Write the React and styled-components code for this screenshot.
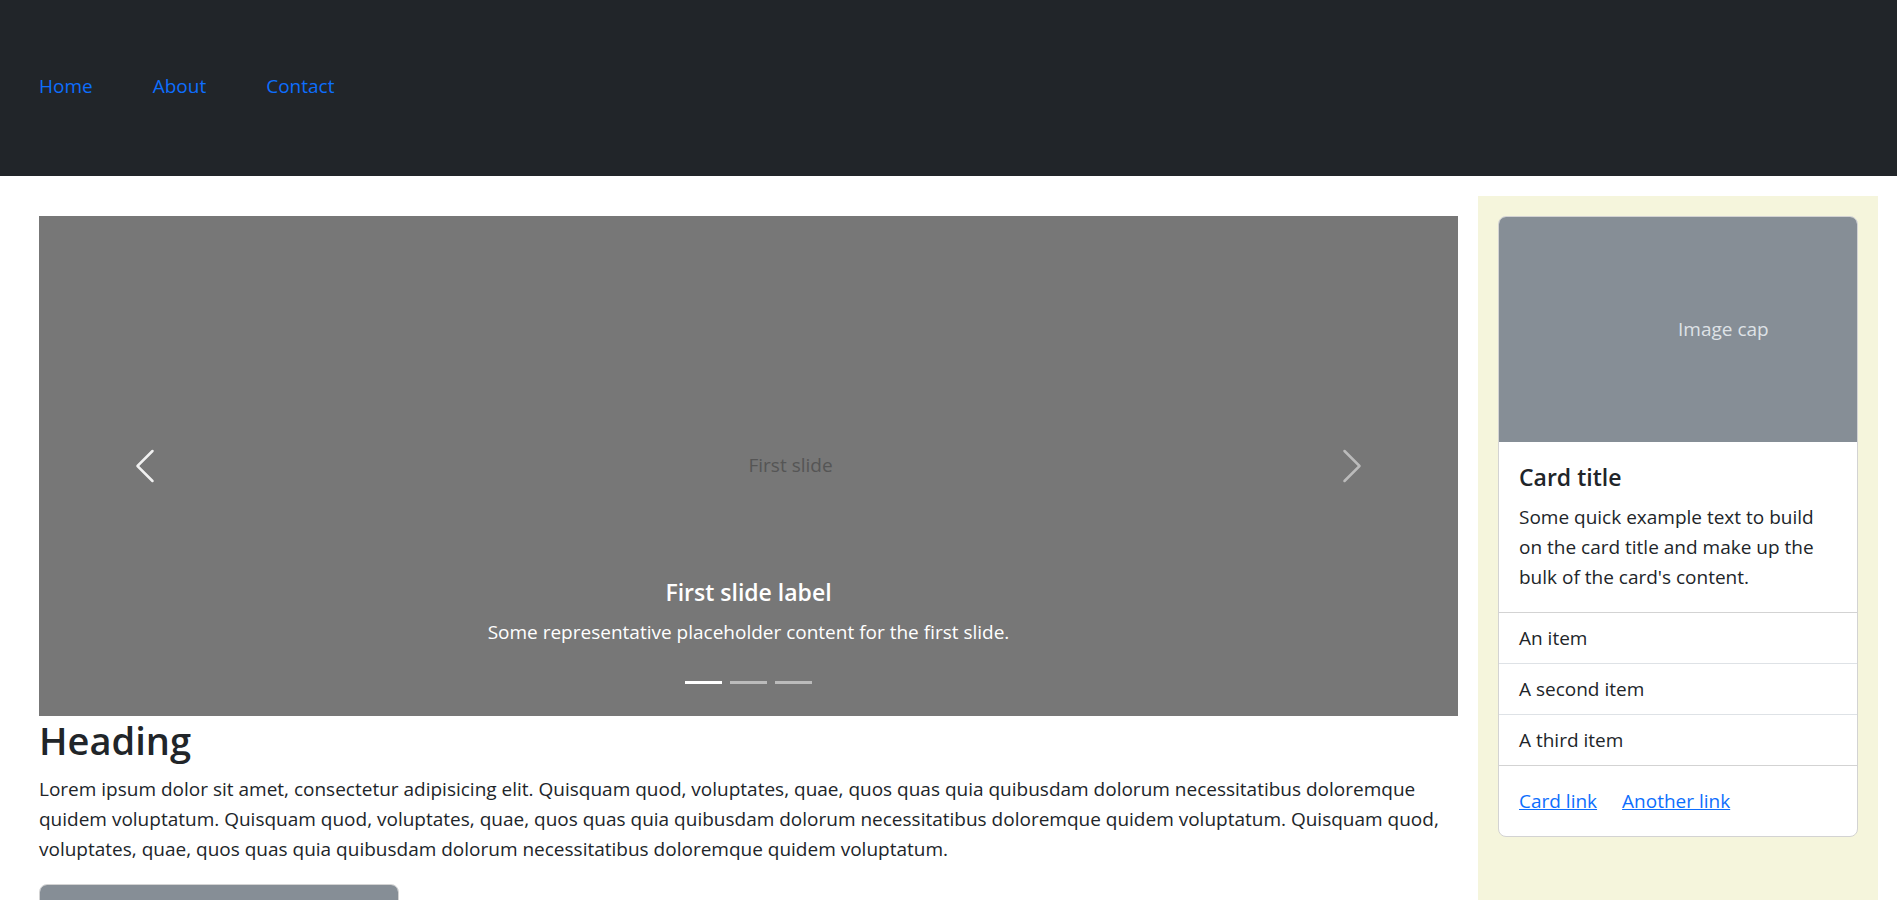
import React from "react";
import styled, { createGlobalStyle } from "styled-components";

const Global = createGlobalStyle`
  *, *::before, *::after { box-sizing: border-box; }
  body {
    margin: 0;
    font-family: "Open Sans", "Noto Sans", sans-serif;
    font-size: 19px;
    line-height: 30px;
    color: #212529;
    background: #fff;
  }
  h1, h5, p, ul { margin: 0; padding: 0; }
`;

const Header = styled.header`
  background: #212529;
  padding: 71px 39px 75px;
`;
const Nav = styled.nav`
  display: flex;
  gap: 60px;
`;
const NavLink = styled.a`
  color: #0d6efd;
  text-decoration: none;
`;
const Page = styled.div`
  display: flex;
  padding: 20px 19px 0 39px;
`;
const Main = styled.main`
  flex: 1;
  min-width: 0;
  padding: 20px 20px 0 0;
`;
const Carousel = styled.section`
  position: relative;
  height: 500px;
  display: flex;
  align-items: center;
  background: #777;
  color: #fff;
`;
const SlideText = styled.span`
  margin-left: 50%;
  padding-bottom: 2px;
  color: #555;
`;
const Control = styled.button`
  position: absolute;
  top: 0;
  bottom: 0;
  ${(p) => p.$side}: 0;
  width: 15%;
  border: 0;
  background: none;
  color: #fff;
  opacity: ${(p) => (p.$active ? 0.9 : 0.5)};
  display: flex;
  align-items: center;
  justify-content: center;
`;
const Caption = styled.div`
  position: absolute;
  left: 15%;
  right: 15%;
  bottom: 69px;
  text-align: center;
`;
const Title = styled.h5`
  font-size: 23px;
  line-height: 30px;
  font-weight: 600;
  margin-bottom: 10px;
`;
const Indicators = styled.div`
  position: absolute;
  left: 15%;
  right: 15%;
  bottom: 32px;
  display: flex;
  justify-content: center;
  gap: 8px;
`;
const Indicator = styled.button`
  width: 37px;
  height: 3px;
  padding: 0;
  border: 0;
  background: #fff;
  opacity: ${(p) => (p.$active ? 1 : 0.5)};
`;
const Heading = styled.h1`
  font-size: 38px;
  line-height: 48px;
  font-weight: 600;
  margin-bottom: 10px;
`;
const Aside = styled.aside`
  width: 400px;
  background: #f5f5dc;
  padding: 20px;
`;
const Card = styled.article`
  border: 1px solid #d3d3d3;
  border-radius: 8px;
  background: #fff;
  overflow: hidden;
`;
const ImageCap = styled.div`
  height: 225px;
  display: flex;
  align-items: center;
  background: #868e96;
  color: #dee2e6;
`;
const CapText = styled.span`
  margin-left: 50%;
  padding-bottom: 2px;
`;
const CardBody = styled.div`
  padding: 20px;
`;
const List = styled.ul`
  list-style: none;
  border-top: 1px solid #d3d3d3;
  border-bottom: 1px solid #d3d3d3;
`;
const Item = styled.li`
  padding: 10px 20px;
  & + & { border-top: 1px solid #dee2e6; }
`;
const CardLinks = styled.div`
  padding: 20px;
  display: flex;
  gap: 25px;
`;
const CardLink = styled.a`
  color: #0d6efd;
`;
const NextCard = styled(Card)`
  width: 360px;
  margin-top: 20px;
`;

function Chevron({ d }) {
  return (
    <svg width="40" height="40" viewBox="0 0 16 16" fill="currentColor" aria-hidden="true">
      <path fillRule="evenodd" d={d} />
    </svg>
  );
}
const LEFT = "M11.354 1.646a.5.5 0 0 1 0 .708L5.707 8l5.647 5.646a.5.5 0 0 1-.708.708l-6-6a.5.5 0 0 1 0-.708l6-6a.5.5 0 0 1 .708 0z";
const RIGHT = "M4.646 1.646a.5.5 0 0 1 .708 0l6 6a.5.5 0 0 1 0 .708l-6 6a.5.5 0 0 1-.708-.708L10.293 8 4.646 2.354a.5.5 0 0 1 0-.708z";

export default function App() {
  return (
    <>
      <Global />
      <Header>
        <Nav>
          {["Home", "About", "Contact"].map((t) => (
            <NavLink href="#" key={t}>{t}</NavLink>
          ))}
        </Nav>
      </Header>
      <Page>
        <Main>
          <Carousel>
            <SlideText>First slide</SlideText>
            <Caption>
              <Title>First slide label</Title>
              <p>Some representative placeholder content for the first slide.</p>
            </Caption>
            <Control $side="left" $active aria-label="Previous"><Chevron d={LEFT} /></Control>
            <Control $side="right" aria-label="Next"><Chevron d={RIGHT} /></Control>
            <Indicators>
              {[1, 2, 3].map((n) => (
                <Indicator key={n} $active={n === 1} aria-label={`Slide ${n}`} />
              ))}
            </Indicators>
          </Carousel>
          <Heading>Heading</Heading>
          <p>
            Lorem ipsum dolor sit amet, consectetur adipisicing elit. Quisquam quod, voluptates, quae, quos quas quia quibusdam dolorum necessitatibus doloremque quidem voluptatum. Quisquam quod, voluptates, quae, quos quas quia quibusdam dolorum necessitatibus doloremque quidem voluptatum. Quisquam quod, voluptates, quae, quos quas quia quibusdam dolorum necessitatibus doloremque quidem voluptatum.
          </p>
          <NextCard><ImageCap /></NextCard>
        </Main>
        <Aside>
          <Card>
            <ImageCap><CapText>Image cap</CapText></ImageCap>
            <CardBody>
              <Title>Card title</Title>
              <p>Some quick example text to build on the card title and make up the bulk of the card's content.</p>
            </CardBody>
            <List>
              <Item>An item</Item>
              <Item>A second item</Item>
              <Item>A third item</Item>
            </List>
            <CardLinks>
              <CardLink href="#">Card link</CardLink>
              <CardLink href="#">Another link</CardLink>
            </CardLinks>
          </Card>
        </Aside>
      </Page>
    </>
  );
}
